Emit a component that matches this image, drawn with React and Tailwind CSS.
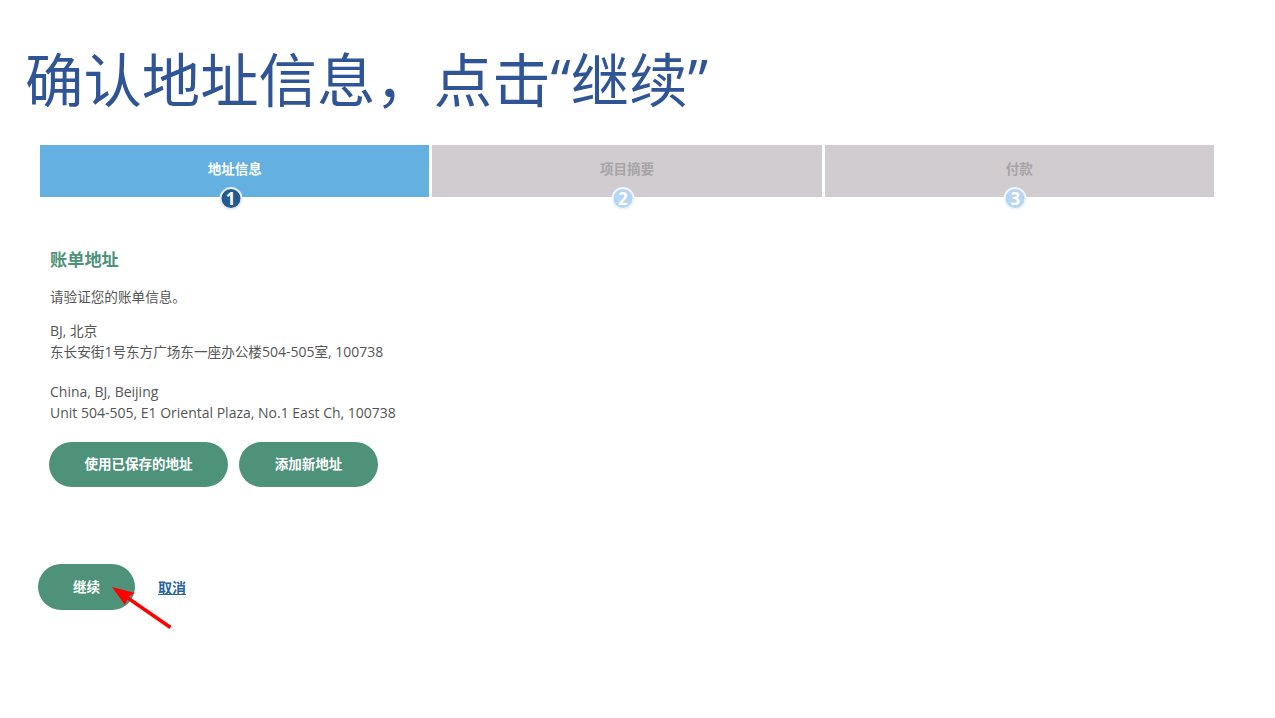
const cjk = { fontFamily: '"Open Sans","Noto Sans CJK SC",sans-serif' };

function Step({ label, n, active }) {
  return (
    <div className={`relative flex-1 h-[52px] flex items-center justify-center ${active ? "bg-[#64b0e0] text-white" : "bg-[#d0ccd0] text-[#a8a4a8]"}`}>
      <span className="text-[13.5px] font-bold relative top-[-2px]">{label}</span>
      <span className={`absolute left-1/2 -translate-x-1/2 ml-[-4px] top-[42px] w-[23px] h-[23px] rounded-full border-2 flex items-center justify-center text-[17px] font-bold text-white ${active ? "bg-[#245a8c] border-[#e6eef5]" : "bg-[#b5d5f0] border-[#eef5fb]"}`}>{n}</span>
    </div>
  );
}

function Btn({ children, className }) {
  return <button className={`bg-[#4e927a] text-white text-[13.5px] font-bold rounded-full ${className}`}>{children}</button>;
}

export default function App() {
  return (
    <div className="relative w-[1275px] h-[718px] bg-white overflow-hidden" style={cjk}>
      <h1 className="pl-[25px] pt-[41px] h-[145px] text-[58.4px] leading-[78px] text-[#2f5597] font-normal whitespace-nowrap">确认地址信息，点击“继续”</h1>
      <div className="ml-[40px] w-[1174px] flex gap-[3px]">
        <Step label="地址信息" n="1" active />
        <Step label="项目摘要" n="2" />
        <Step label="付款" n="3" />
      </div>
      <div className="pl-[50px] text-[#555555] text-[14px]">
        <h2 className="mt-[51px] text-[17.2px] leading-[24px] font-bold text-[#4e927a]">账单地址</h2>
        <p className="mt-[15px] leading-[20px] text-[13.6px]">请验证您的账单信息。</p>
        <p className="mt-[14px] leading-[20.5px]">BJ, <span className="text-[13.6px]">北京</span><br /><span className="text-[13.6px]">东长安街</span>1<span className="text-[13.6px]">号东方广场东一座办公楼</span>504-505<span className="text-[13.6px]">室</span>, 100738</p>
        <p className="mt-[20px] leading-[20.5px]">China, BJ, Beijing<br />Unit 504-505, E1 Oriental Plaza, No.1 East Ch, 100738</p>
      </div>
      <div className="ml-[49px] mt-[19px] flex gap-[11px]">
        <Btn className="w-[179px] h-[45px]">使用已保存的地址</Btn>
        <Btn className="w-[139px] h-[45px]">添加新地址</Btn>
      </div>
      <div className="ml-[38px] mt-[77px] flex items-center gap-[23px]">
        <Btn className="w-[97px] h-[46px]">继续</Btn>
        <a className="text-[14px] font-bold text-[#2a6496] underline">取消</a>
      </div>
      <svg className="absolute left-[105px] top-[580px]" width="75" height="55" viewBox="0 0 75 55">
        <path d="M65.5 47.5 L20 16" stroke="#ff0000" strokeWidth="3.5" />
        <path d="M7 7 L30 13 L23 17 L20 25 Z" fill="#ff0000" />
      </svg>
    </div>
  );
}
